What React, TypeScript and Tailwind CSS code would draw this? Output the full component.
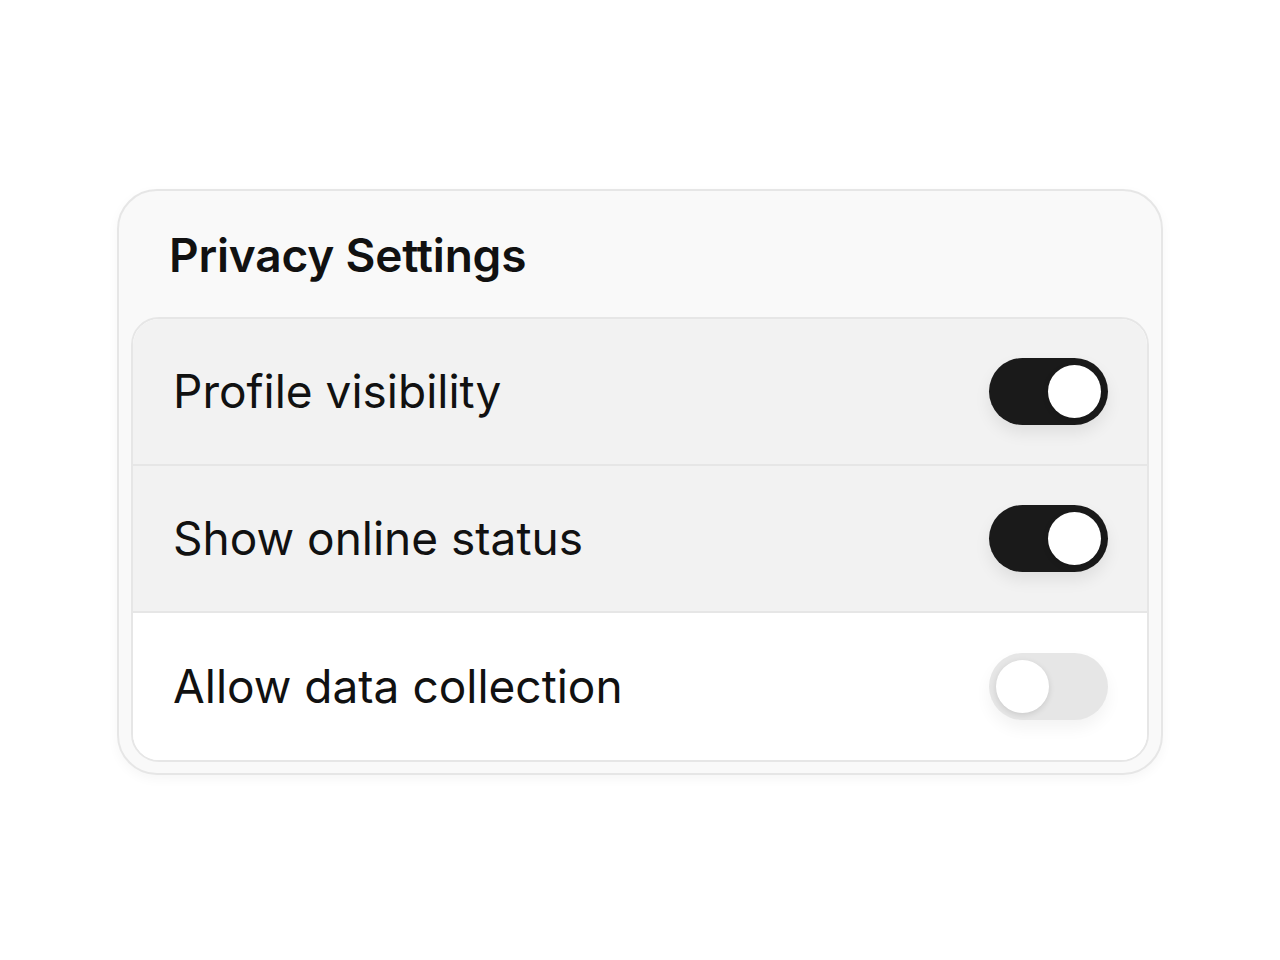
import { useState } from 'react';

interface ToggleProps {
  on: boolean;
  onChange: () => void;
  label: string;
}

function Toggle({ on, onChange, label }: ToggleProps) {
  return (
    <button
      role="switch"
      aria-checked={on}
      aria-label={label}
      onClick={onChange}
      className={
        on
          ? 'w-[119px] h-[67px] rounded-full bg-[#1a1a1a] p-[7px] flex items-center justify-end shadow-[0_8px_16px_rgba(0,0,0,0.08)]'
          : 'w-[119px] h-[67px] rounded-full bg-[#e6e6e6] p-[7px] flex items-center justify-start shadow-[0_8px_16px_rgba(0,0,0,0.05)]'
      }
    >
      <span className="block w-[53px] h-[53px] rounded-full bg-white shadow-[0_2px_6px_rgba(0,0,0,0.12)]" />
    </button>
  );
}

const rows = [
  { id: 'profile', label: 'Profile visibility', on: true },
  { id: 'online', label: 'Show online status', on: true },
  { id: 'data', label: 'Allow data collection', on: false },
];

export default function App() {
  const [state, setState] = useState<Record<string, boolean>>(
    Object.fromEntries(rows.map((r) => [r.id, r.on]))
  );

  return (
    <div
      className="w-full min-h-screen bg-white pt-[189px] px-[117px]"
      style={{ fontFamily: 'Inter, "Noto Sans", sans-serif' }}
    >
      <div className="w-[1046px] rounded-[40px] border-2 border-[#e6e6e6] bg-[#f9f9f9] px-[12px] pb-[11px] shadow-[0_4px_12px_rgba(0,0,0,0.04)]">
        {/* Header */}
        <h1 className="h-[126px] pl-[38px] pt-[30px] text-[46px] font-semibold text-[#111] tracking-[-0.2px]">
          Privacy Settings
        </h1>

        {/* Settings list */}
        <div className="rounded-[28px] border-2 border-[#e6e6e6] overflow-hidden bg-white">
          {rows.map((row, i) => (
            <div
              key={row.id}
              className={
                (state[row.id] ? 'bg-[#f2f2f2] ' : 'bg-white ') +
                (i < rows.length - 1 ? 'border-b-2 border-[#e6e6e6] ' : '') +
                'h-[147px] flex items-center justify-between pl-[40px] pr-[39px]'
              }
            >
              <span className="text-[46px] text-[#111] font-normal">{row.label}</span>
              <Toggle
                on={state[row.id]}
                label={row.label}
                onChange={() => setState((s) => ({ ...s, [row.id]: !s[row.id] }))}
              />
            </div>
          ))}
        </div>
      </div>
    </div>
  );
}
